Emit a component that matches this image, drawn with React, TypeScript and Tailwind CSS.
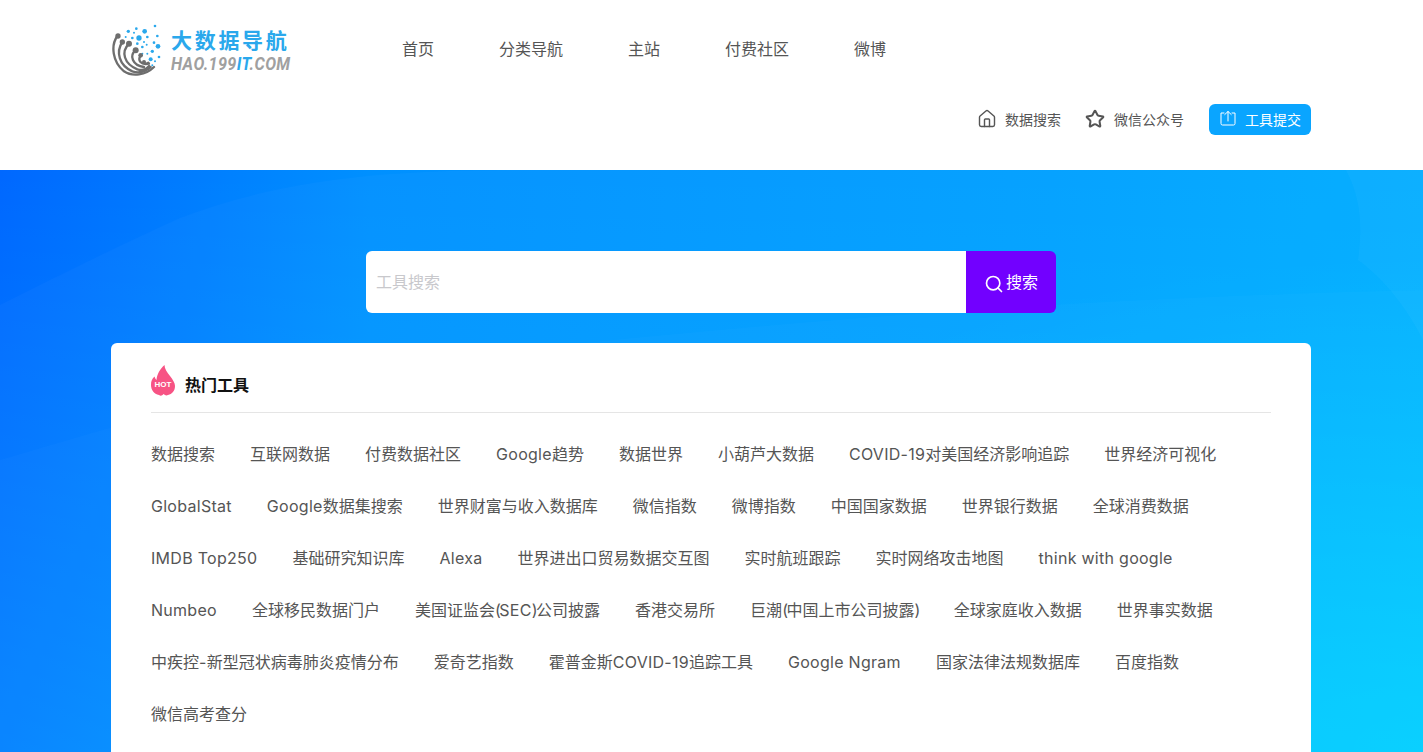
import { Home, Search, Star } from "lucide-react";

const navItems = ["首页", "分类导航", "主站", "付费社区", "微博"];

const toolRows = [
  ["数据搜索", "互联网数据", "付费数据社区", "Google趋势", "数据世界", "小葫芦大数据", "COVID-19对美国经济影响追踪", "世界经济可视化"],
  ["GlobalStat", "Google数据集搜索", "世界财富与收入数据库", "微信指数", "微博指数", "中国国家数据", "世界银行数据", "全球消费数据"],
  ["IMDB Top250", "基础研究知识库", "Alexa", "世界进出口贸易数据交互图", "实时航班跟踪", "实时网络攻击地图", "think with google"],
  ["Numbeo", "全球移民数据门户", "美国证监会(SEC)公司披露", "香港交易所", "巨潮(中国上市公司披露)", "全球家庭收入数据", "世界事实数据"],
  ["中疾控-新型冠状病毒肺炎疫情分布", "爱奇艺指数", "霍普金斯COVID-19追踪工具", "Google Ngram", "国家法律法规数据库", "百度指数"],
  ["微信高考查分"],
];

// logo dots, x / y / r in the svg's own viewBox
const dots = [
  [168, 42, 4], [112, 50, 4], [88, 58, 5], [137, 58, 7], [105, 62, 3], [80, 75, 3], [100, 78, 4], [120, 78, 8],
  [145, 75, 4], [175, 72, 4], [165, 92, 4], [143, 98, 3], [135, 90, 3], [115, 95, 4], [177, 103, 7], [160, 118, 5],
  [130, 105, 4], [180, 135, 4], [155, 142, 6], [168, 148, 3], [145, 125, 3], [130, 125, 3], [160, 160, 3],
];

function Logo() {
  return (
    <div className="flex items-center w-[180px] h-[60px]">
      <svg viewBox="36 36 156 162" className="shrink-0 w-[52px] h-[54px] mt-[2px]" fill="none">
        {dots.map(([x, y, r], i) => (
          <circle key={i} cx={x} cy={y} r={r} fill="#2aa8ec" />
        ))}
        <g stroke="#6e6e6e" strokeWidth="7" strokeLinecap="round">
          <path d="M55 72C35 100 40 150 75 178C100 195 140 190 165 165" />
          <path d="M70 90C50 120 60 160 100 178C120 185 140 178 155 165" />
          <path d="M90 95C65 120 75 155 115 172C130 177 142 172 150 162" />
          <path d="M110 115C90 130 100 160 135 165" />
          <path d="M125 130C115 145 125 160 150 155" />
          <path d="M135 150C135 155 140 158 148 152" />
        </g>
        <g fill="#6e6e6e">
          <circle cx="57" cy="72" r="8" />
          <circle cx="70" cy="90" r="8" />
          <circle cx="90" cy="95" r="9" />
          <circle cx="110" cy="115" r="9" />
          <circle cx="125" cy="130" r="7" />
          <circle cx="135" cy="150" r="6" />
        </g>
      </svg>
      <div className="ml-[8px] flex flex-col whitespace-nowrap">
        <span className="text-[21px] leading-[25px] font-bold tracking-[2.7px] text-[#2aa8ec] font-['Noto_Sans_CJK_SC',sans-serif]">大数据导航</span>
        <span className="w-[118px] text-[18px] leading-[21px] mt-[1px] font-bold italic tracking-[0.4px] text-[#a0a0a0] font-['Roboto',sans-serif] origin-left scale-x-[0.9]">
          HAO.199<span className="text-[#2aa8ec]">IT</span>.COM
        </span>
      </div>
    </div>
  );
}

function HotIcon() {
  return (
    <div className="relative w-6 h-8 shrink-0 mb-[7px]">
      <svg viewBox="0 0 24 32" className="w-6 h-8">
        <path
          fill="#f75384"
          d="M13.500 0C13.500 4 16 7 19 11C22 15 24 18 24 21C24 26 21 29 17 30C15 31 14 30 12.500 29C11 31 9.500 31 8 30C3 29 0 25 0 20C0 16 1 14 3.500 11.500C4 13 4.500 14 5.500 15C6 9 9 4 13.500 0Z"
        />
      </svg>
      <span className="absolute left-0 right-0 top-[15px] text-center text-[8px] leading-[10px] font-bold text-white font-['Liberation_Sans',sans-serif]">HOT</span>
    </div>
  );
}

// latin runs sit a little wider and brackets a little tighter than the fallback fonts give
function ToolLabel({ text }: { text: string }) {
  return (
    <a>
      {text.split(/([A-Za-z0-9 -]+|[()])/).map((part, i) => {
        if (part === "(" || part === ")") return <span key={i} className="tracking-[-1.5px]">{part}</span>;
        if (/^[A-Za-z0-9 -]+$/.test(part)) return <span key={i} className="tracking-[0.28px]">{part}</span>;
        return part;
      })}
    </a>
  );
}

export default function App() {
  return (
    <div className="h-screen overflow-hidden bg-white font-['Inter','Noto_Sans_CJK_SC',sans-serif]">
      <header className="h-[170px] bg-white">
        <div className="w-[1200px] ml-[111px]">
          <div className="flex items-center h-[100px]">
            <Logo />
            <nav className="flex ml-[111px] mb-[2px] gap-[65px] text-base text-[#555]">
              {navItems.map((item) => (
                <a key={item} className="whitespace-nowrap">{item}</a>
              ))}
            </nav>
          </div>
          <div className="flex justify-end items-center h-[38px] text-[#555] text-sm">
            <a className="flex items-center">
              <Home size={20} strokeWidth={1.7} className="text-[#555]" />
              <span className="ml-[8px] pt-[1px]">数据搜索</span>
            </a>
            <a className="flex items-center ml-[24px]">
              <Star size={20} strokeWidth={2.4} className="text-[#555]" />
              <span className="ml-[9px] pt-[1px]">微信公众号</span>
            </a>
            <a className="flex items-center ml-[25px] pl-[10px] w-[102px] h-[31px] rounded-md bg-[#0aa5ff] text-white">
              <svg width="18" height="18" viewBox="0 0 18 18" fill="none" stroke="white" strokeWidth="1" strokeLinecap="round" strokeLinejoin="round">
                <path d="M5 3H2v10.500a1.500 1.500 0 0 0 1.500 1.500h11a1.500 1.500 0 0 0 1.500-1.500V3H13" />
                <path d="M9 11V1.500M5.800 4.500 9 1.500l3.200 3" />
              </svg>
              <span className="ml-[8px] pt-[1px]">工具提交</span>
            </a>
          </div>
        </div>
      </header>

      <main className="relative h-[582px] pt-[81px] bg-[radial-gradient(ellipse_900px_500px_at_100%_100%,rgba(0,255,255,0.3),transparent),linear-gradient(to_bottom,transparent,rgba(0,255,255,0.17)),linear-gradient(to_right,#0068ff_0%,#0090ff_26%,#00a0ff_74%,#00adff_100%)]">
        {/* faint light bands in the hero background */}
        <svg viewBox="0 0 1423 582" className="absolute inset-0 w-full h-full" fill="white">
          <path opacity="0.025" d="M0 135C60 105 120 75 180 48C280 10 380 0 520 0H1423V582H0Z" />
          <path opacity="0.02" d="M0 290C120 255 240 215 420 190C700 160 1000 130 1423 120V582H0Z" />
          <path opacity="0.03" d="M1346 0C1362 30 1362 60 1358 90C1400 120 1423 170 1423 170V0Z" />
        </svg>

        <div className="relative flex w-[690px] h-[62px] ml-[366px] rounded-md overflow-hidden">
          <input
            placeholder="工具搜索"
            className="flex-1 min-w-0 bg-white px-[10px] text-base outline-none placeholder:text-[#c8c8cc]"
          />
          <button className="flex items-center justify-center w-[90px] bg-[#7200ff] text-white text-base">
            <Search size={20} strokeWidth={2} className="mt-[3px]" />
            <span className="ml-[2px]">搜索</span>
          </button>
        </div>

        <section className="relative w-[1200px] ml-[111px] mt-[30px] bg-white rounded-t-md px-10 pt-[21px] h-[500px]">
          <div className="flex items-center h-[49px] border-b border-[#e5e5e5] pb-[7px]">
            <HotIcon />
            <h2 className="ml-[10px] text-base font-bold text-[#111]">热门工具</h2>
          </div>
          <div className="mt-[15px] text-base text-[#555]">
            {toolRows.map((row, i) => (
              <div key={i} className="flex gap-[35px] h-[52px] items-center whitespace-nowrap">
                {row.map((t) => (
                  <ToolLabel key={t} text={t} />
                ))}
              </div>
            ))}
          </div>
        </section>
      </main>
    </div>
  );
}
